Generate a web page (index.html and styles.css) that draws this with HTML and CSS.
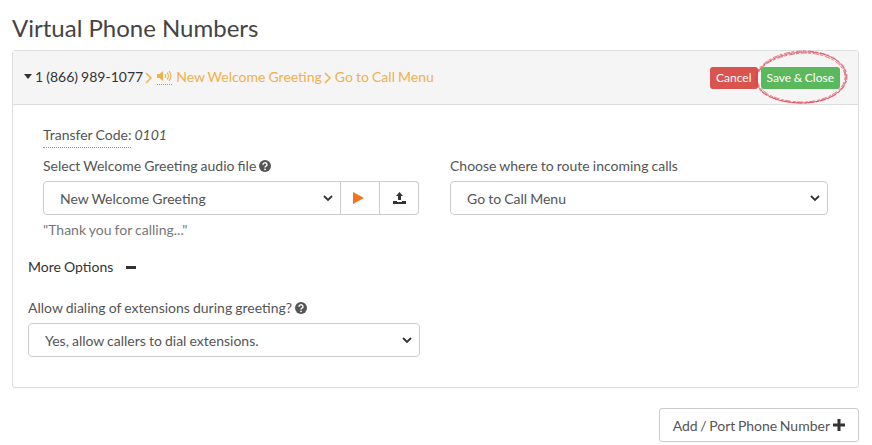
FILE: index.html
```html
<!DOCTYPE html>
<html lang="en">
<head>
  <meta charset="UTF-8">
  <title>Virtual Phone Numbers</title>
  <link rel="stylesheet" href="styles.css">
</head>
<body>
  <h1>Virtual Phone Numbers</h1>
  <div class="card">
    <div class="card-head">
      <div class="crumbs">
        <svg class="caret" viewBox="0 0 8 5" width="8" height="5"><path d="M0 0h8L4 5z"/></svg>
        <span class="number">1 (866) 989-1077</span>
        <svg class="sep" viewBox="0 0 7 12" width="7" height="12"><path d="M1 1l5 5-5 5"/></svg>
        <span class="speaker">
          <svg viewBox="0 0 15 12" width="15" height="12"><path class="fill" d="M0 4h2.500L6 1v10L2.500 8H0z"/><path class="wave" d="M8 4.200a2.500 2.500 0 0 1 0 3.600M10 2.700a4.700 4.700 0 0 1 0 6.600M12 1.200a7 7 0 0 1 0 9.600"/></svg>
        </span>
        <span class="crumb">New Welcome Greeting</span>
        <svg class="sep" viewBox="0 0 7 12" width="7" height="12"><path d="M1 1l5 5-5 5"/></svg>
        <span class="crumb">Go to Call Menu</span>
      </div>
      <div class="actions">
        <button class="btn-small btn-cancel">Cancel</button>
        <button class="btn-small btn-save">Save &amp; Close</button>
      </div>
      <svg class="scribble" viewBox="0 0 96 58" width="96" height="58">
        <path d="M3 31C2 17 24 4 50 3c23-1 42 9 43 24 1 16-20 27-45 27C24 54 5 45 3 31z"/>
        <path class="rough" d="M4 28C6 15 27 5 52 4c22 0 41 11 40 25-1 14-22 25-46 24C23 52 3 43 4 28z"/>
        <path class="rough" d="M2 30C3 15 25 2 51 2c24 0 43 11 43 26 0 15-21 27-47 26C24 53 3 46 2 30z"/>
      </svg>
    </div>
    <div class="card-body">
      <div class="inset">
        <div class="transfer"><span class="dotted">Transfer Code:</span> <em>0101</em></div>
        <div class="two-col">
          <div class="col">
            <label class="field-label">Select Welcome Greeting audio file
              <svg class="help" viewBox="0 0 12 12" width="12" height="12"><circle cx="6" cy="6" r="6"/><path d="M4 4.700a2 1.800 0 1 1 3 1.500c-.7.400-1 .7-1 1.300"/><circle class="dot" cx="6" cy="9.300" r=".9"/></svg>
            </label>
            <div class="select-group">
              <select class="select"><option>New Welcome Greeting</option></select>
              <button class="addon addon-play">
                <svg viewBox="0 0 11 12" width="11" height="12"><path fill="#f47321" d="M0 0l11 6-11 6z"/></svg>
              </button>
              <button class="addon">
                <svg viewBox="0 0 13 12" width="13" height="12"><path fill="#333" d="M6.500 0l3.500 4H8v4H5V4H3zM0 9h4v1h5V9h4v3H0z"/></svg>
              </button>
            </div>
            <div class="quote">"Thank you for calling..."</div>
          </div>
          <div class="col">
            <label class="field-label">Choose where to route incoming calls</label>
            <select class="select"><option>Go to Call Menu</option></select>
          </div>
        </div>
      </div>
      <div class="more">More Options <span class="minus"></span></div>
      <label class="field-label">Allow dialing of extensions during greeting?
        <svg class="help" viewBox="0 0 12 12" width="12" height="12"><circle cx="6" cy="6" r="6"/><path d="M4 4.700a2 1.800 0 1 1 3 1.500c-.7.400-1 .7-1 1.300"/><circle class="dot" cx="6" cy="9.300" r=".9"/></svg>
      </label>
      <select class="select select-wide"><option>Yes, allow callers to dial extensions.</option></select>
    </div>
  </div>
  <div class="footer-row">
    <button class="btn-add">Add / Port Phone Number
      <svg viewBox="0 0 12 12" width="12" height="12"><path fill="#333" d="M4.500 0h3v4.500H12v3H7.500V12h-3V7.500H0v-3h4.500z"/></svg>
    </button>
  </div>
</body>
</html>
```

FILE: styles.css
```css
* {
  box-sizing: border-box;
}
body {
  font-family: Lato, "Open Sans", sans-serif;
  font-size: 14px;
  word-spacing: -0.5px;
  color: #555;
  background: #fff;
  margin: 0;
  padding: 0 13px 0 12px;
  overflow: hidden;
}
h1 {
  font-size: 24px;
  font-weight: 400;
  line-height: 29px;
  word-spacing: 0;
  color: #444;
  margin: 0;
  padding: 13px 0 8px;
}
.card {
  border: 1px solid #ddd;
  border-radius: 3px;
  height: 338px;
}
.card-head {
  position: relative;
  display: flex;
  align-items: center;
  justify-content: space-between;
  height: 54px;
  padding: 0 18px 0 11px;
  background: #f5f5f5;
  border-bottom: 1px solid #ddd;
}
.crumbs {
  display: flex;
  align-items: center;
  padding-bottom: 2px;
  color: #f0b04e;
}
.caret {
  fill: #333;
  margin-right: 3px;
}
.number {
  color: #333;
}
.sep {
  fill: none;
  stroke: #f0b04e;
  stroke-width: 1.500;
  margin: 2px 4px 0 2px;
}
.speaker {
  display: flex;
  border-bottom: 1px dotted #999;
  padding-bottom: 2px;
  margin: 2px 4px 0 1px;
}
.speaker .fill {
  fill: #f0b04e;
}
.speaker .wave {
  fill: none;
  stroke: #f0b04e;
  stroke-width: 1.200;
}
.actions {
  display: flex;
  gap: 3px;
}
.btn-small {
  font-family: inherit;
  font-size: 12px;
  word-spacing: inherit;
  height: 22px;
  padding: 0 6px;
  color: #fff;
  border: 0;
  border-radius: 3px;
}
.btn-cancel {
  background: #d9534f;
}
.btn-save {
  background: #5cb85c;
}
.scribble {
  position: absolute;
  top: -2px;
  right: 9px;
  fill: none;
  stroke: #e0404f;
  stroke-width: 0.800;
}
.scribble .rough {
  stroke-width: 1;
  stroke-dasharray: 3 2 6 1;
  opacity: 0.7;
}
.card-body {
  padding: 20px 15px 0;
}
.inset {
  padding: 0 15px;
}
.transfer {
  line-height: 20px;
  margin-bottom: 11px;
}
.dotted {
  border-bottom: 1px dotted #999;
  padding-bottom: 4px;
}
.two-col {
  display: grid;
  grid-template-columns: 376px 1fr;
  gap: 31px;
}
.field-label {
  display: block;
  line-height: 20px;
  margin-bottom: 5px;
}
.help {
  vertical-align: -1px;
  fill: #555;
}
.help path {
  fill: none;
  stroke: #fff;
  stroke-width: 1.500;
}
.help .dot {
  fill: #fff;
}
.select {
  display: block;
  width: 100%;
  height: 34px;
  font-family: inherit;
  font-size: 14px;
  word-spacing: inherit;
  color: #555;
  appearance: none;
  background: #fff url("data:image/svg+xml,%3Csvg xmlns='http://www.w3.org/2000/svg' width='10' height='6'%3E%3Cpath d='M1 1l4 4 4-4' fill='none' stroke='%23333' stroke-width='1.800'/%3E%3C/svg%3E") no-repeat right 7px center;
  border: 1px solid #ccc;
  border-radius: 4px;
  padding: 0 16px;
}
.select-group {
  display: flex;
}
.select-group .select {
  flex: 1;
  min-width: 0;
  border-radius: 4px 0 0 4px;
}
.addon {
  display: flex;
  align-items: center;
  justify-content: center;
  width: 39px;
  height: 34px;
  background: #fff;
  border: 1px solid #ccc;
  border-left: 0;
  padding: 0;
}
.addon-play {
  padding-right: 3px;
}
.addon:last-child {
  border-radius: 0 4px 4px 0;
}
.quote {
  color: #777;
  line-height: 20px;
  margin-top: 5px;
}
.more {
  display: flex;
  align-items: center;
  color: #333;
  line-height: 20px;
  margin: 17px 0 21px;
}
.minus {
  width: 10px;
  height: 3px;
  background: #333;
  margin-left: 13px;
}
.select-wide {
  width: 392px;
}
.footer-row {
  display: flex;
  justify-content: flex-end;
  margin-top: 20px;
}
.btn-add {
  display: flex;
  align-items: center;
  gap: 3px;
  height: 34px;
  padding: 0 13px 0 13px;
  font-family: inherit;
  font-size: 14px;
  word-spacing: -1px;
  color: #555;
  background: #fff;
  border: 1px solid #ccc;
  border-radius: 3px;
}
```
